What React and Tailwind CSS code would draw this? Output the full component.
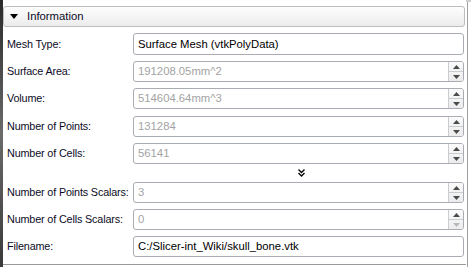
import React from 'react'

const font = { fontFamily: 'Tahoma, "Liberation Sans", Arial, sans-serif' }

const SpinArrows = ({ downDisabled }) => (
  <div className="flex flex-col w-[15px] h-full border-l border-[#c9cdd2] bg-gradient-to-b from-[#fbfbfb] to-[#ececec]">
    <div className="flex-1 flex items-center justify-center border-b border-[#c9cdd2]">
      <svg width="7" height="4" viewBox="0 0 7 4"><path d="M0 4 L3.5 0 L7 4 Z" fill="#4a4a4a" /></svg>
    </div>
    <div className="flex-1 flex items-center justify-center">
      <svg width="7" height="4" viewBox="0 0 7 4">
        <path d="M0 0 L7 0 L3.5 4 Z" fill={downDisabled ? '#b8b8b8' : '#4a4a4a'} />
      </svg>
    </div>
  </div>
)

const Row = ({ label, value, spin, disabled, downDisabled, className = '' }) => (
  <div className={`flex items-center h-[21px] ${className}`}>
    <div className="w-[130px] pl-[4px] text-[10.8px] tracking-[-0.15px] text-[#0b0b1e] whitespace-nowrap">{label}</div>
    <div className="flex-1 flex items-center h-full border border-[#a9adb3] rounded-[3px] bg-white overflow-hidden mr-[2px]">
      <div className={`flex-1 pl-[4px] text-[11.3px] whitespace-nowrap ${disabled ? 'text-[#a3a3a3]' : 'text-black'}`}>{value}</div>
      {spin && <SpinArrows downDisabled={downDisabled} />}
    </div>
  </div>
)

export default function App() {
  return (
    <div className="flex w-[471px] h-[267px] bg-white overflow-hidden" style={font}>
      {/* background strip on the left */}
      <div className="w-[3px] h-full bg-gradient-to-b from-[#2a2a2a] via-[#6b6b6b] to-[#3a3a3a]" />

      <div className="w-[463px] flex flex-col">
        <div className="h-[6px]" />
        {/* collapsible header */}
        <div className="flex items-center h-[21px] w-[462px] border border-[#bdbdbd] rounded-[3px] bg-gradient-to-b from-[#fdfdfd] to-[#ececec]">
          <svg className="ml-[6px]" width="8" height="5" viewBox="0 0 8 5"><path d="M0 0 L8 0 L4 5 Z" fill="#000" /></svg>
          <span className="ml-[9px] text-[11.3px] text-[#0b0b1e]">Information</span>
        </div>

        <div className="flex flex-col gap-[6px] mt-[6px]">
          <Row label="Mesh Type:" value="Surface Mesh (vtkPolyData)" className="h-[22px]" />
          <Row label="Surface Area:" value="191208.05mm^2" spin disabled />
          <Row label="Volume:" value="514604.64mm^3" spin disabled />
          <Row label="Number of Points:" value="131284" spin disabled className="mt-[1px]" />
          <Row label="Number of Cells:" value="56141" spin disabled />
        </div>

        <div className="flex justify-center items-center h-[18px] pl-[130px]">
          <svg width="7" height="8" viewBox="0 0 7 8" className="ml-[4px]">
            <path d="M0.5 0.5 L3.5 3.5 L6.5 0.5" stroke="#000" strokeWidth="1.3" fill="none" />
            <path d="M0.5 4 L3.5 7 L6.5 4" stroke="#000" strokeWidth="1.3" fill="none" />
          </svg>
        </div>

        <div className="flex flex-col gap-[5px]">
          <Row label="Number of Points Scalars:" value="3" spin disabled />
          <Row label="Number of Cells Scalars:" value="0" spin disabled downDisabled className="mt-[1px]" />
          <Row label="Filename:" value="C:/Slicer-int_Wiki/skull_bone.vtk" className="mt-[1px]" />
        </div>

        <div className="mt-auto mb-[2px] h-[1px] bg-[#9a9a9a]" />
      </div>

      {/* right frame */}
      <div className="flex flex-col w-[5px]">
        <div className="h-[2px] bg-[#cfcfcf]" />
        <div className="flex-1 flex">
          <div className="w-[1px] ml-[1px] bg-[#a0a0a0]" />
        </div>
      </div>
    </div>
  )
}
